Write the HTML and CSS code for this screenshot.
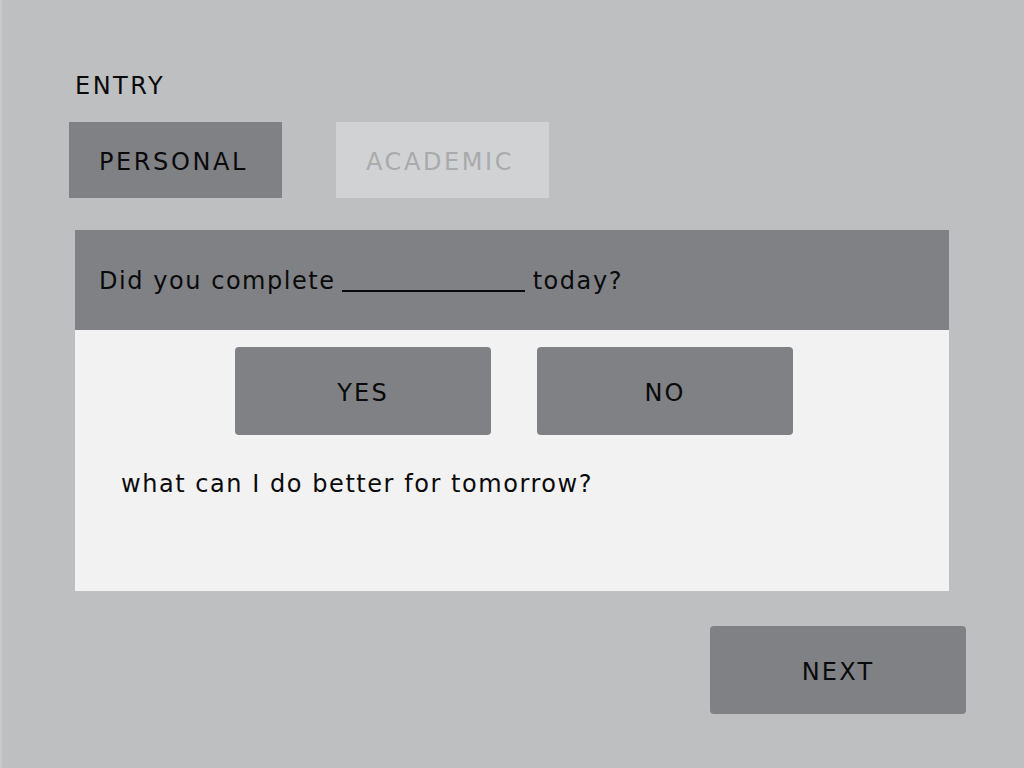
FILE: index.html
```html
<!DOCTYPE html>
<html lang="en">
<head>
  <meta charset="UTF-8">
  <meta name="viewport" content="width=device-width, initial-scale=1.0">
  <title>Entry</title>
  <link rel="stylesheet" href="styles.css">
</head>
<body>
  <div class="page">
    <h1 class="title">ENTRY</h1>

    <div class="tabs">
      <div class="tab active">PERSONAL</div>
      <div class="tab">ACADEMIC</div>
    </div>

    <div class="card">
      <div class="card-head">Did you complete <span class="blank"></span> today?</div>
      <div class="card-body">
        <div class="answers">
          <button class="btn">YES</button>
          <button class="btn">NO</button>
        </div>
        <p class="prompt">what can I do better for tomorrow?</p>
      </div>
    </div>

    <div class="footer">
      <button class="btn">NEXT</button>
    </div>
  </div>
</body>
</html>
```

FILE: styles.css
```css
* { box-sizing: border-box; }
html, body { margin: 0; height: 100%; }
body { background: #bebfc1; font-family: "DejaVu Sans", sans-serif; font-size: 24px; letter-spacing: 1.55px; color: #0a0a0a; }
.page { height: 100%; border-left: 2px solid #c8c9cb; padding: 70px 0 0 67px; }
.title { margin: 0 0 0 6px; font-size: 24px; font-weight: normal; line-height: 32px; letter-spacing: 2.5px; }
.tabs { display: flex; gap: 54px; margin-top: 20px; }
.tab { width: 213px; height: 76px; display: flex; align-items: center; padding: 3px 0 0 30px; letter-spacing: 2.6px; background: #d1d2d4; color: #a9aaac; }
.tab.active { background: #808184; color: #0a0a0a; }
.card { width: 874px; margin: 32px 0 0 6px; }
.card-head { height: 100px; background: #808184; display: flex; align-items: center; padding: 2px 24px 0; }
.blank { display: inline-block; width: 183px; height: 22px; border-bottom: 2px solid #0a0a0a; margin: 0 8px 0 6px; }
.card-body { height: 261px; background: #f2f2f2; padding: 17px 0 0 160px; }
.answers { display: flex; gap: 46px; }
.btn { width: 256px; height: 88px; border: none; border-radius: 4px; padding: 3px 0 0; background: #808184; font-family: inherit; font-size: 24px; letter-spacing: 2.2px; color: #0a0a0a; }
.prompt { margin: 34px 0 0 -114px; line-height: 30px; }
.footer { width: 897px; display: flex; justify-content: flex-end; margin-top: 35px; }
```
